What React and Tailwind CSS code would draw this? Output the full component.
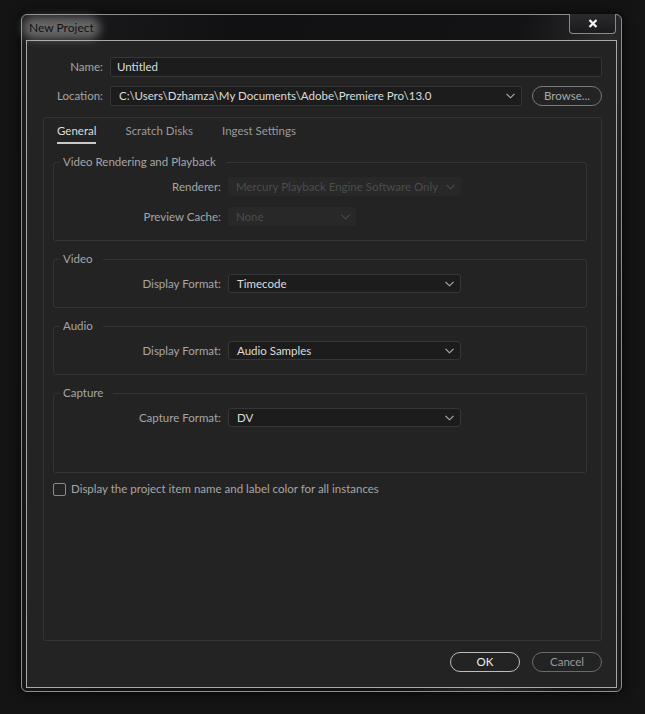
import React from "react";

const Chevron = ({ dim }) => (
  <svg width="9" height="6" viewBox="0 0 9 6" className="shrink-0">
    <path d="M0.5 0.8 L4.5 4.8 L8.5 0.8" fill="none" stroke={dim ? "#4a4a4a" : "#b0b0b0"} strokeWidth="1.1" />
  </svg>
);

const Select = ({ value, width, disabled }) => (
  <div
    className={`h-[19px] flex items-center justify-between pl-[8px] pr-[6px] rounded-[3px] whitespace-nowrap ${
      disabled ? "bg-[#282828] text-[#4c4c4c]" : "bg-[#1c1c1c] border border-[#363636] text-[#dcdcdc]"
    }`}
    style={{ width }}
  >
    <span>{value}</span>
    <Chevron dim={disabled} />
  </div>
);

const Row = ({ label, children }) => (
  <div className="flex items-center">
    <div className="w-[174px] pr-[7px] text-right text-[#a6a6a6]">{label}</div>
    {children}
  </div>
);

const Group = ({ title, children, pb, gap }) => (
  <fieldset className={`border border-[#343434] rounded-[3px] pl-0 pr-0 pt-[7px] ${pb}`}>
    <legend className="ml-[6px] pl-[3px] pr-[10px] leading-[16px] text-[#a6a6a6]">{title}</legend>
    <div className={`flex flex-col ${gap}`}>{children}</div>
  </fieldset>
);

export default function App() {
  return (
    <div
      className="w-[645px] h-[714px] bg-[#141414] pt-[14px] pl-[21px] text-[11.5px] leading-[16px] overflow-hidden"
      style={{ fontFamily: "Lato, 'Open Sans', sans-serif" }}
    >
      <div className="relative w-[601px] h-[678px] rounded-[6px] border border-[#8e8e8e] bg-[linear-gradient(100deg,#1c1c1e_0%,#111113_30%,#131315_70%,#2a2a2c_82%,#151517_92%,#1c1c1e_100%)] px-[4px] pb-[3px] shadow-[0_0_12px_rgba(0,0,0,0.8)]">
        <div className="h-[25px] flex items-center pl-[3px]">
          <span className="relative">
            <span className="absolute -inset-x-[6px] -inset-y-[3px] rounded-full bg-[rgba(200,200,200,0.45)] blur-[5px]" />
            <span className="relative text-[#121212] text-[12px]">New Project</span>
          </span>
        </div>
        <div className="absolute top-[-1px] right-[5px] w-[47px] h-[20px] rounded-b-[4px] border border-t-0 border-[#8a8a8a] bg-[linear-gradient(#2a2a2c,#1a1a1c)] flex items-center justify-center">
          <svg width="10" height="9" viewBox="0 0 10 9">
            <path d="M1.5 1 L8.5 8 M8.5 1 L1.5 8" stroke="#f4f4f4" strokeWidth="2.2" />
          </svg>
        </div>

        <div className="h-[648px] border border-[#a8a8a8] bg-[#232323] flex flex-col pt-[16px] pl-[16px] pr-[14px] pb-[15px]">
          <div className="flex items-center">
            <div className="w-[60px] text-right text-[#a6a6a6]">Name:</div>
            <div className="ml-[7px] flex-1 h-[20px] bg-[#1c1c1c] border border-[#363636] rounded-[3px] flex items-center pl-[6px] text-[#dcdcdc]">
              Untitled
            </div>
          </div>
          <div className="flex items-center mt-[9px]">
            <div className="w-[60px] text-right text-[#a6a6a6]">Location:</div>
            <div className="ml-[7px] flex-1 h-[20px] bg-[#1c1c1c] border border-[#363636] rounded-[3px] flex items-center justify-between pl-[8px] pr-[6px] text-[#dcdcdc]">
              <span>C:\Users\Dzhamza\My Documents\Adobe\Premiere Pro\13.0</span>
              <Chevron />
            </div>
            <div className="ml-[10px] w-[70px] h-[20px] rounded-full border border-[#7a7a7a] flex items-center justify-center text-[#a8a8a8]">
              Browse...
            </div>
          </div>

          <div className="mt-[11px] flex-1 border border-[#333333] rounded-[2px] flex flex-col pl-[9px] pr-[10px]">
            <div className="flex gap-[29px] pl-[4px] pt-[5px]">
              <div className="flex flex-col items-start">
                <span className="text-[#dcdcdc]">General</span>
                <span className="mt-[3px] h-[2px] w-full bg-[#c8c8c8]" />
              </div>
              <span className="text-[#9a9a9a]">Scratch Disks</span>
              <span className="text-[#9a9a9a]">Ingest Settings</span>
            </div>

            <div className="mt-[10px] mr-[4px] flex flex-col gap-[10px]">
              <Group title="Video Rendering and Playback" pb="pb-[14px]" gap="gap-[11px]">
                <Row label="Renderer:">
                  <Select value="Mercury Playback Engine Software Only" width={233} disabled />
                </Row>
                <Row label="Preview Cache:">
                  <Select value="None" width={128} disabled />
                </Row>
              </Group>
              <Group title="Video" pb="pb-[14px]" gap="">
                <Row label="Display Format:">
                  <Select value="Timecode" width={233} />
                </Row>
              </Group>
              <Group title="Audio" pb="pb-[14px]" gap="">
                <Row label="Display Format:">
                  <Select value="Audio Samples" width={233} />
                </Row>
              </Group>
              <Group title="Capture" pb="pb-[45px]" gap="">
                <Row label="Capture Format:">
                  <Select value="DV" width={233} />
                </Row>
              </Group>
              <div className="flex items-center gap-[5px] -mt-[2px]">
                <div className="w-[13px] h-[13px] border-[1.5px] border-[#8a8a8a] rounded-[2px]" />
                <span className="text-[#a6a6a6]">Display the project item name and label color for all instances</span>
              </div>
            </div>
          </div>

          <div className="mt-[11px] flex justify-end gap-[12px]">
            <div className="w-[70px] h-[20px] rounded-full border border-[#bdbdbd] flex items-center justify-center text-[#eeeeee]">
              OK
            </div>
            <div className="w-[70px] h-[20px] rounded-full border border-[#6a6a6a] flex items-center justify-center text-[#9a9a9a]">
              Cancel
            </div>
          </div>
        </div>
      </div>
    </div>
  );
}
